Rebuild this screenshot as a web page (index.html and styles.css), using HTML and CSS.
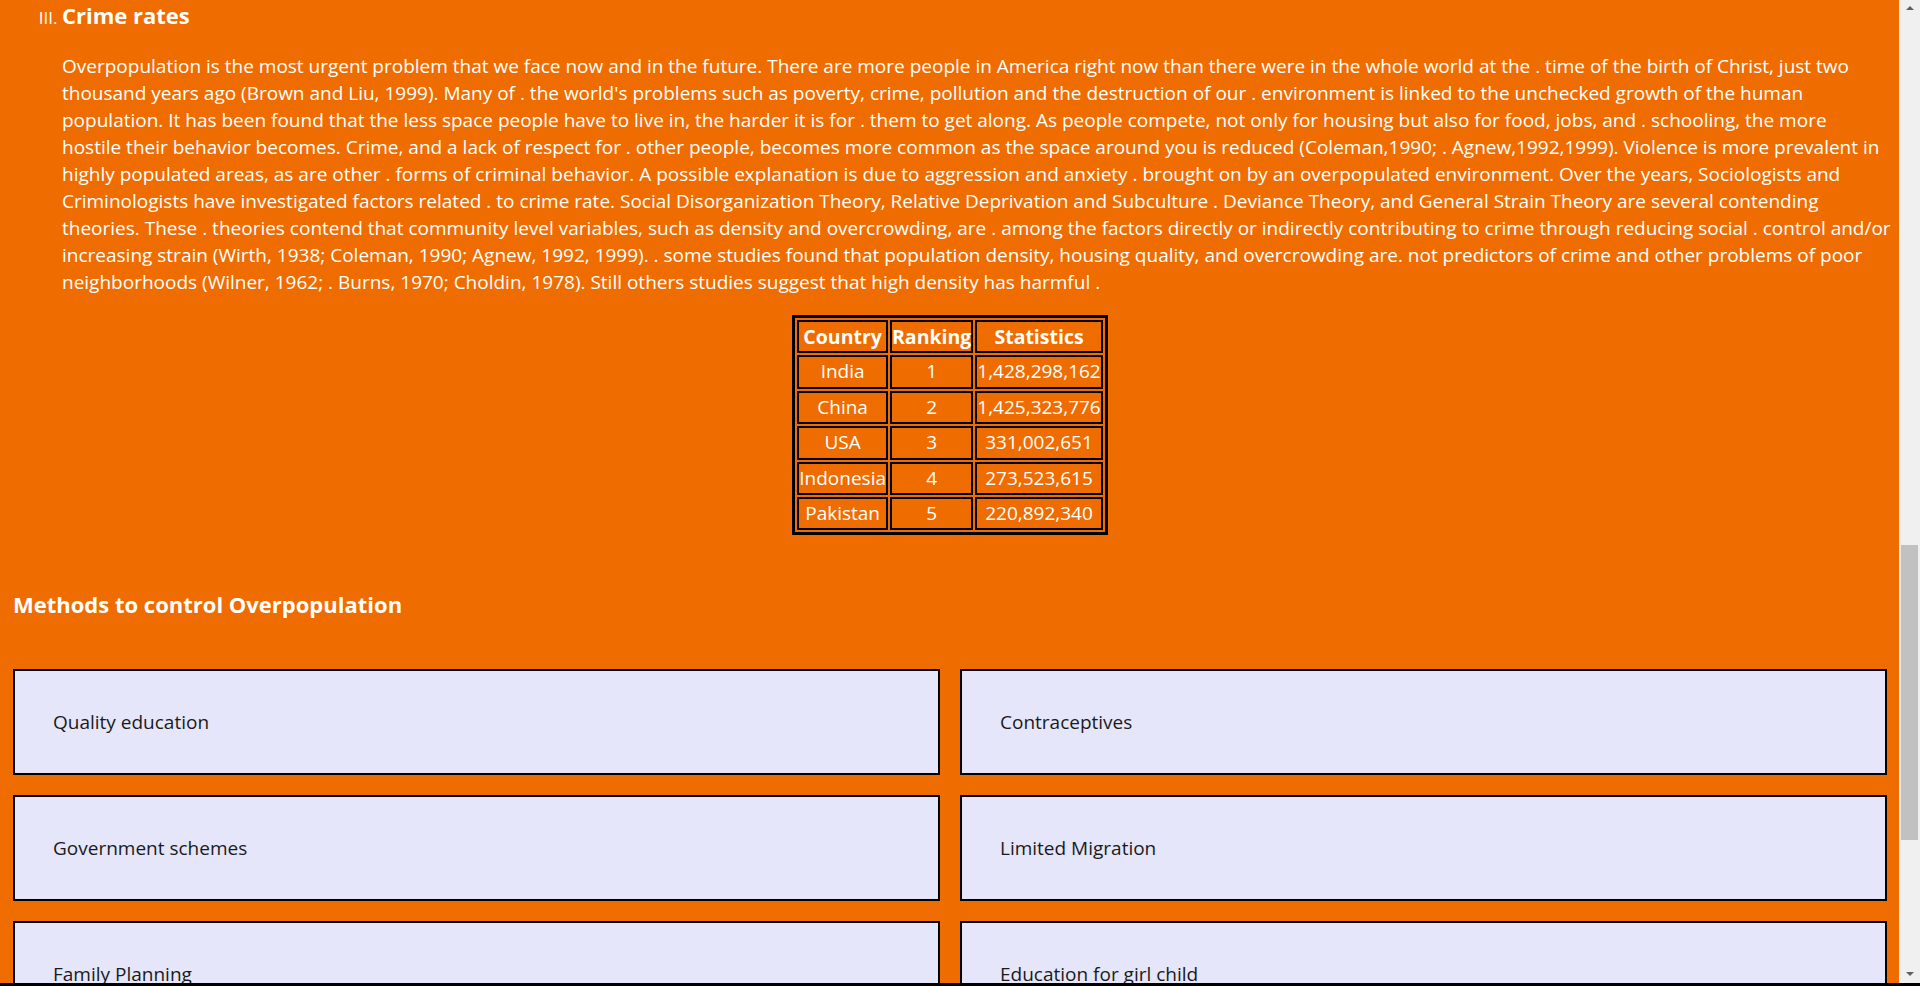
FILE: index.html
```html
<!DOCTYPE html>
<html lang="en">
<head>
<meta charset="utf-8">
<title>Overpopulation</title>
<link rel="stylesheet" href="styles.css">
</head>
<body>
<main class="page">
  <ol class="topics" start="3">
    <li class="topic">
      <h2 class="topic-title">Crime rates</h2>
      <p class="topic-text">Overpopulation is the most urgent problem that we face now and in the future. There are more people in America right now than there were in the whole world at the . time of the birth of Christ, just two<br>
      thousand years ago (Brown and Liu, 1999). Many of . the world's problems such as poverty, crime, pollution and the destruction of our . environment is linked to the unchecked growth of the human<br>
      population. It has been found that the less space people have to live in, the harder it is for . them to get along. As people compete, not only for housing but also for food, jobs, and . schooling, the more<br>
      hostile their behavior becomes. Crime, and a lack of respect for . other people, becomes more common as the space around you is reduced (Coleman,1990; . Agnew,1992,1999). Violence is more prevalent in<br>
      highly populated areas, as are other . forms of criminal behavior. A possible explanation is due to aggression and anxiety . brought on by an overpopulated environment. Over the years, Sociologists and<br>
      Criminologists have investigated factors related . to crime rate. Social Disorganization Theory, Relative Deprivation and Subculture . Deviance Theory, and General Strain Theory are several contending<br>
      theories. These . theories contend that community level variables, such as density and overcrowding, are . among the factors directly or indirectly contributing to crime through reducing social . control and/or<br>
      increasing strain (Wirth, 1938; Coleman, 1990; Agnew, 1992, 1999). . some studies found that population density, housing quality, and overcrowding are. not predictors of crime and other problems of poor<br>
      neighborhoods (Wilner, 1962; . Burns, 1970; Choldin, 1978). Still others studies suggest that high density has harmful .</p>
    </li>
  </ol>

  <table class="stats">
    <thead>
      <tr><th>Country</th><th>Ranking</th><th>Statistics</th></tr>
    </thead>
    <tbody>
      <tr><td>India</td><td>1</td><td>1,428,298,162</td></tr>
      <tr><td>China</td><td>2</td><td>1,425,323,776</td></tr>
      <tr><td>USA</td><td>3</td><td>331,002,651</td></tr>
      <tr><td>Indonesia</td><td>4</td><td>273,523,615</td></tr>
      <tr><td>Pakistan</td><td>5</td><td>220,892,340</td></tr>
    </tbody>
  </table>

  <h2 class="section-title">Methods to control Overpopulation</h2>

  <div class="methods">
    <div class="method-card">Quality education</div>
    <div class="method-card">Contraceptives</div>
    <div class="method-card">Government schemes</div>
    <div class="method-card">Limited Migration</div>
    <div class="method-card">Family Planning</div>
    <div class="method-card">Education for girl child</div>
  </div>
</main>
<div class="scrollbar" aria-hidden="true">
  <span class="scroll-arrow scroll-arrow-up"></span>
  <span class="scroll-thumb"></span>
  <span class="scroll-arrow scroll-arrow-down"></span>
</div>
</body>
</html>
```

FILE: styles.css
```css
html {
  height: 100%;
  background: #ef6c00;
}

body {
  box-sizing: border-box;
  display: flex;
  height: 100vh;
  margin: 0;
  overflow: hidden;
  border-bottom: 3px solid #000;
  background: #ef6c00;
  color: #ffffff;
  font-family: "Segoe UI", "Open Sans", sans-serif;
}

.page {
  box-sizing: border-box;
  flex: 1;
  min-width: 0;
  height: 100%;
  overflow-y: scroll;
  scrollbar-width: none;
  padding: 0 12px 60px 13px;
}

.page::-webkit-scrollbar {
  display: none;
}

/* vertical scrollbar rail */
.scrollbar {
  display: flex;
  flex-direction: column;
  align-items: center;
  flex: 0 0 21px;
  height: 100%;
  background: #f0f0f0;
}

.scroll-arrow {
  width: 0;
  height: 0;
  border-left: 4px solid transparent;
  border-right: 4px solid transparent;
}

.scroll-arrow-up {
  margin-top: 6px;
  border-bottom: 4px solid #606060;
}

.scroll-arrow-down {
  margin-top: auto;
  margin-bottom: 7px;
  border-top: 4px solid #606060;
}

.scroll-thumb {
  align-self: stretch;
  margin: 535px 2px 0;
  height: 295px;
  background: #c1c1c1;
}

.topics {
  list-style-type: upper-roman;
  margin: 0;
  padding: 0 0 0 49px;
}

.topic {
  font-size: 19px;
}

.topic::marker {
  font-size: 17px;
  font-weight: 400;
}

.topic-title {
  margin: 0 0 23px;
  font-size: 22px;
  font-weight: 700;
  line-height: 30px;
}

.topic-text {
  margin: 0;
  font-size: 19px;
  line-height: 27px;
  white-space: nowrap;
}

.stats {
  margin: 19px auto 0;
  border: 3px solid #000;
  border-spacing: 2px;
  font-size: 19px;
  line-height: 27.4px;
  color: #fff;
}

.stats th,
.stats td {
  border: 2px solid #000;
  padding: 1px 0;
  text-align: center;
  white-space: nowrap;
}

.stats th {
  font-size: 19.5px;
  font-weight: 700;
}

.section-title {
  margin: 53px 0 49px;
  font-size: 22px;
  font-weight: 700;
  line-height: 32px;
}

.methods {
  display: grid;
  grid-template-columns: 1fr 1fr;
  gap: 20px;
}

.method-card {
  background: #e6e6fa;
  border: 2px solid #000;
  padding: 38px;
  font-size: 19px;
  line-height: 26px;
  color: #1a1a1a;
}
```
